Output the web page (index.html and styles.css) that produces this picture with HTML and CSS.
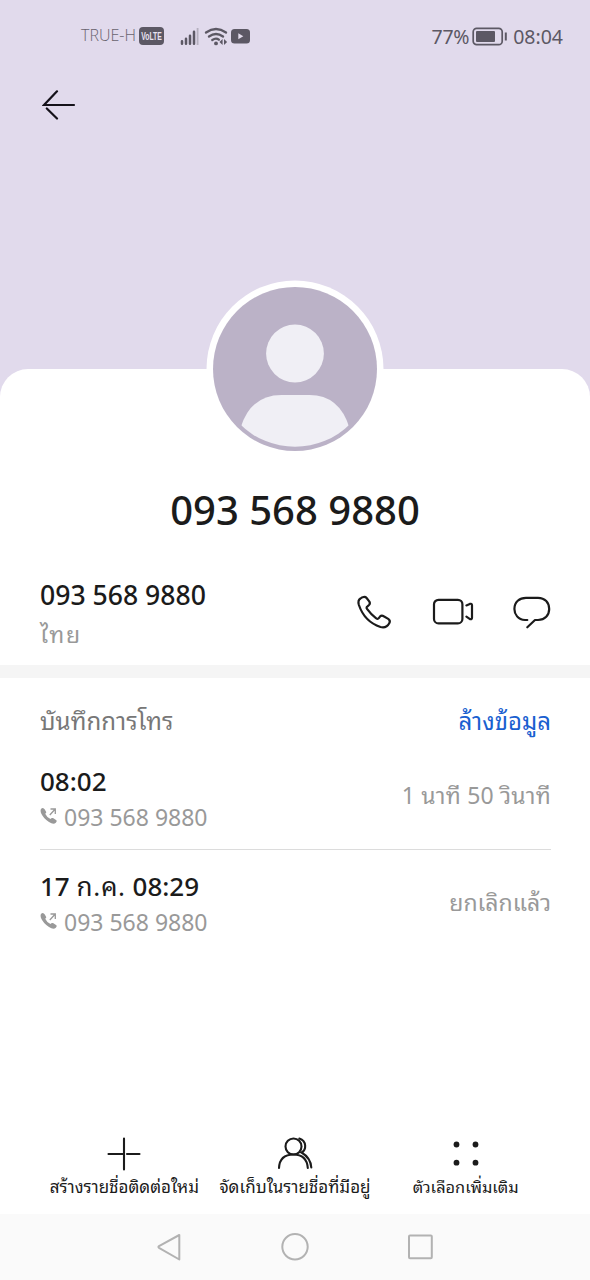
FILE: index.html
```html
<!DOCTYPE html>
<html lang="th">
<head>
<meta charset="utf-8">
<title>093 568 9880</title>
<link rel="stylesheet" href="styles.css">
</head>
<body>
<div class="screen">
  <header class="hero">
    <div class="status">
      <span class="carrier">TRUE-H</span>
      <svg class="volte" width="25" height="18" viewBox="0 0 25 18"><rect width="25" height="18" rx="4"/><text x="2.2" y="13.2" textLength="20.6" lengthAdjust="spacingAndGlyphs">VoLTE</text></svg>
      <svg class="signals" width="72" height="20" viewBox="0 0 72 20" fill="none" stroke="#5c5864">
        <path d="M2 14.2v2.6M6 11.7v5.1M10 8.7v8.1M14 4.7v12.1" stroke-width="2.5" stroke-linecap="round"/>
        <path d="M17.6 1v17" stroke="#b5b0bf" stroke-width="1.8"/>
        <path d="M26 5.5q10-7 20 0M29 9.5q7-5 14 0M32.3 13q3.7-2.6 6.5-.3" stroke-width="2.3" stroke-linecap="round"/>
        <circle cx="36" cy="16.4" r="1.9" fill="#5c5864" stroke="none"/>
        <path d="M42.6 12v6l-3.1-3zM44 12v6l3.1-3z" fill="#5c5864" stroke="none"/>
        <rect x="51" y="2" width="19" height="14.5" rx="3.5" fill="#5c5864" stroke="none"/>
        <path d="M58.3 6.3v6l5-3z" fill="#e3dcec" stroke="none"/>
      </svg>
      <span class="percent">77%</span>
      <svg class="battery" width="36" height="20" viewBox="0 0 36 20" fill="none">
        <rect x="1.2" y="1.3" width="29" height="16.4" rx="3.5" stroke="#5c5864" stroke-width="1.7"/>
        <rect x="4" y="4" width="19" height="11" rx="1" fill="#5c5864"/>
        <path d="M33.8 5.5v8" stroke="#5c5864" stroke-width="2"/>
      </svg>
      <span class="clock">08:04</span>
    </div>
    <svg class="back" width="34" height="32" viewBox="0 0 34 32" fill="none" stroke="#15121a" stroke-width="2.2" stroke-linecap="round">
      <path d="M32 16H2L15 2.3M4.8 19.5 15 29.5"/>
    </svg>
  </header>
  <main class="sheet">
    <svg class="avatar" width="178" height="178" viewBox="0 0 178 178">
      <defs><clipPath id="bust"><circle cx="89" cy="88.8" r="78"/></clipPath></defs>
      <circle cx="89" cy="89" r="88.5" fill="#fff"/>
      <circle cx="89" cy="89" r="82" fill="#bbb2c7"/>
      <circle cx="89" cy="73.5" r="28.9" fill="#f0eff5"/>
      <path d="M34.5 148Q44.5 115 75.5 115h28q30 0 40 33v30H34.5z" fill="#f0eff5" clip-path="url(#bust)"/>
    </svg>
    <h1 class="title">093 568 9880</h1>
    <section class="contact">
      <div class="details">
        <div class="number">093 568 9880</div>
        <div class="country">ไทย</div>
      </div>
      <svg class="actions" width="196" height="36" viewBox="0 0 196 36" fill="none" stroke="#1b1b1b" stroke-width="2.2" stroke-linecap="round" stroke-linejoin="round">
        <path d="M5.5 3.5C3.5 4.7 3 7 3.9 10C7.3 20 15 28.5 25.5 32C29 33 32.5 31.5 34.4 28C35.3 26.4 34.7 25 33.2 23.9L28.7 21.2C27.3 20.3 26 20.5 25 21.6L23.8 23.2C23.1 24.1 22.1 24.1 21.2 23.3C17.7 20.7 14.5 17.4 12 13.9C11.3 12.9 11.5 12 12.5 11.3L14 10C15 9 15.1 7.8 14.4 6.6L11.6 3C10 1.1 7.2 2.1 5.5 3.5Z"/>
        <rect x="79" y="4.8" width="28.4" height="23.6" rx="4.5"/>
        <path d="m111.4 10.4 3.4-1.5q2.2-.6 2.2 1.3v12.6q0 1.9-2 1.3l-3.6-2.4"/>
        <path d="M172.3 25H170C163 24.7 159.4 19.3 159.4 14C159.4 7 164.5 2.8 171 2.8H183C190 2.8 194.2 7.8 194.2 14C194.2 20 190 24.9 183 25H180L172.3 32.3"/>
      </svg>
    </section>
    <div class="band"></div>
    <section class="log">
      <div class="log-head"><span class="log-title">บันทึกการโทร</span><span class="clear">ล้างข้อมูล</span></div>
      <div class="call first">
        <div>
          <div class="when">08:02</div>
          <div class="who"><svg class="out" width="18" height="18" viewBox="0 0 18 18"><path d="M1 2Q3-.3 4.8 2.5L6.2 4.9Q6.5 6 5.2 6.8Q6.5 10 10.5 12Q11.6 10.4 13 11.1L16 13Q17.5 14 15.8 15.7Q13.5 18 9 15Q3 11 1 6Q.2 3.5 1 2Z" fill="#999"/><path d="M9.8 8 15 2.2M10.5 2H15.3V7" fill="none" stroke="#999" stroke-width="1.3"/></svg><span class="caller">093 568 9880</span></div>
        </div>
        <span class="result">1 นาที 50 วินาที</span>
      </div>
      <div class="call">
        <div>
          <div class="when">17 <span class="month">ก.ค.</span> 08:29</div>
          <div class="who"><svg class="out" width="18" height="18" viewBox="0 0 18 18"><path d="M1 2Q3-.3 4.8 2.5L6.2 4.9Q6.5 6 5.2 6.8Q6.5 10 10.5 12Q11.6 10.4 13 11.1L16 13Q17.5 14 15.8 15.7Q13.5 18 9 15Q3 11 1 6Q.2 3.5 1 2Z" fill="#999"/><path d="M9.8 8 15 2.2M10.5 2H15.3V7" fill="none" stroke="#999" stroke-width="1.3"/></svg><span class="caller">093 568 9880</span></div>
        </div>
        <span class="result">ยกเลิกแล้ว</span>
      </div>
    </section>
    <nav class="toolbar">
      <div class="tool">
        <svg width="36" height="36" viewBox="0 0 36 36" fill="none" stroke="#1b1b1b" stroke-width="2.1" stroke-linecap="round"><path d="M18 2.5v31M2.5 18H17M21 18h12.5"/></svg>
        <span class="label">สร้างรายชื่อติดต่อใหม่</span>
      </div>
      <div class="tool">
        <svg width="36" height="36" viewBox="0 0 36 36" fill="none" stroke="#1b1b1b" stroke-width="2.1" stroke-linecap="round"><circle cx="16.5" cy="10.5" r="8"/><path d="M2 32C2.5 22 9 18.5 16.5 18.5S30 22 30.8 32M22.3 2.5C30 5 29.5 14 24.5 16.5C30.5 20 33.8 24 34.3 31.5"/></svg>
        <span class="label">จัดเก็บในรายชื่อที่มีอยู่</span>
      </div>
      <div class="tool">
        <svg width="36" height="36" viewBox="0 0 36 36" fill="#1b1b1b"><circle cx="8.5" cy="8.5" r="2.9"/><circle cx="27.5" cy="8.5" r="2.9"/><circle cx="8.5" cy="26.7" r="2.9"/><circle cx="27.5" cy="26.7" r="2.9"/></svg>
        <span class="label more">ตัวเลือกเพิ่มเติม</span>
      </div>
    </nav>
  </main>
  <footer class="system">
    <svg width="28" height="28" viewBox="0 0 28 28"><path d="M4 13.2 24.3 2v24.5L4 14.8q-1.2-.8 0-1.6z"/></svg>
    <svg width="28" height="28" viewBox="0 0 28 28"><circle cx="14" cy="13.7" r="12.7"/></svg>
    <svg width="28" height="28" viewBox="0 0 28 28"><rect x="2" y="2.4" width="22.8" height="22.8" rx="1"/></svg>
  </footer>
</div>
</body>
</html>
```
FILE: styles.css
```css
* { box-sizing: border-box; }
body { margin: 0; font-family: "Noto Sans", "Noto Sans Thai Looped", "Noto Looped Thai", Loma, Waree, "Noto Sans Thai", sans-serif; color: #1b1b1b; }
svg { display: block; flex: none; }
span, .title, .number, .when { white-space: nowrap; }
.screen { width: 590px; height: 1280px; display: flex; flex-direction: column; background: #e1daec; overflow: hidden; }
.hero { height: 369px; flex: none; }
.status { height: 74px; padding: 0 27px 0 81px; display: flex; align-items: center; color: #5c5864; }
.carrier { font: 300 16px/20px "Open Sans", sans-serif; width: 58px; margin-top: -4px; color: #68636f; }
.volte rect { fill: #5c5864; }
.volte text { fill: #e9e2f1; font: 700 11.5px "Liberation Sans", sans-serif; }
.volte { margin-top: -2px; }
.signals { margin-left: 16px; }
.percent { margin-left: auto; font-size: 19.5px; line-height: 24px; letter-spacing: -.3px; }
.battery { margin: 0 5px 0 3px; }
.clock { font-size: 19.5px; line-height: 24px; }
.back { margin: 15px 0 0 42px; }
.sheet { height: 845px; flex: none; background: #fff; border-radius: 28px 28px 0 0; display: flex; flex-direction: column; }
.avatar { margin: -89px auto 0; }
.title { margin: 27px 0 0; height: 50px; font-weight: 500; font-size: 40px; line-height: 50px; text-align: center; }
.contact { height: 130px; padding: 43px 39px 0 40px; display: flex; justify-content: space-between; }
.number { font-weight: 500; font-size: 26.6px; line-height: 34px; }
.country { font-size: 23px; line-height: 32px; margin-top: 6px; color: #999; letter-spacing: 1.6px; }
.actions { margin-top: 17px; }
.band { height: 13px; flex: none; background: #f5f5f5; }
.log { padding: 0 39px 0 40px; height: 427px; flex: none; }
.log-head { height: 86px; padding-bottom: 4px; display: flex; align-items: center; justify-content: space-between; font-size: 24px; }
.log-title { color: #777; letter-spacing: .1px; }
.clear { color: #1a5fd0; }
.call { height: 106px; padding-top: 18px; display: flex; justify-content: space-between; }
.call.first { height: 86px; padding-top: 0; border-bottom: 1px solid #dcdcdc; }
.first .when { margin-top: -1px; }
.when { font-weight: 500; font-size: 26px; line-height: 36px; }
.month { font-weight: 400; letter-spacing: .7px; }
.who { display: flex; height: 36px; gap: 6px; color: #999; }
.out { margin-top: 8px; }
.caller { font-size: 23px; line-height: 36px; }
.result { color: #999; font-size: 23px; line-height: 36px; margin-top: 16px; }
.first .result { margin-top: 13px; letter-spacing: .2px; }
.toolbar { margin-top: 31px; padding: 0 39px; display: flex; }
.tool { flex: 1; display: flex; flex-direction: column; align-items: center; }
.label { font-size: 17px; line-height: 26px; margin-top: 2px; }
.more { font-size: 16.4px; }
.system { height: 66px; background: #fafafa; padding: 0 155px; display: flex; align-items: center; justify-content: space-between; }
.system svg { fill: none; stroke: #b2b2b2; stroke-width: 2; stroke-linejoin: round; }
```
